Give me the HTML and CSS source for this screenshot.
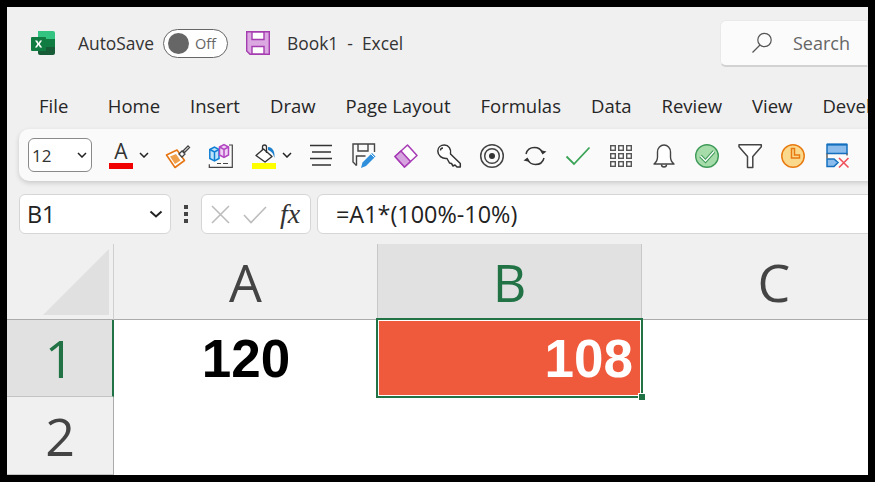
FILE: index.html
```html
<!DOCTYPE html>
<html lang="en">
<head>
<meta charset="utf-8">
<title>Book1 - Excel</title>
<link rel="stylesheet" href="styles.css">
</head>
<body>
<div class="app">
  <header class="titlebar">
    <svg class="logo" width="24" height="24" viewBox="0 0 24 24">
      <path d="M7 0h15a2 2 0 0 1 2 2v6H7z" fill="#33c481"/>
      <path d="M7 8h17v8H7z" fill="#21a366"/>
      <path d="M7 16h17v6a2 2 0 0 1-2 2H9a2 2 0 0 1-2-2z" fill="#185c37"/>
      <path d="M15 8h9v8h-9z" fill="#107c41"/>
      <rect x="0" y="6" width="15" height="14" rx="1" fill="#107c41"/>
      <path d="M4 9.500h2.200l1.400 2.400 1.400-2.400h2.100l-2.400 3.500 2.500 3.600H9l-1.500-2.500-1.500 2.500H3.900l2.500-3.600z" fill="#fff"/>
    </svg>
    <span class="autosave">AutoSave</span>
    <div class="toggle"><span class="knob"></span><span class="off">Off</span></div>
    <svg class="savebtn" width="24" height="24" viewBox="0 0 24 24">
      <path d="M.7.700h22.600v22.600H4L.7 20z" fill="#dba8e2" stroke="#a53db0" stroke-width="1.400"/>
      <path d="M6 1h12v7.500H6zM6 15.500h12V23H6z" fill="#fff" stroke="#a53db0" stroke-width="1.400"/>
    </svg>
    <span class="doc">Book1&nbsp; -&nbsp; Excel</span>
    <div class="search">
      <svg width="22" height="22" viewBox="0 0 22 22"><circle cx="13.500" cy="8" r="6.700" fill="none" stroke="#555" stroke-width="1.200"/><path d="M9 13 1.500 20.500" stroke="#555" stroke-width="1.200"/></svg>
      <span>Search</span>
    </div>
  </header>

  <nav class="tabs">
    <span>File</span><span>Home</span><span>Insert</span><span>Draw</span><span>Page Layout</span><span>Formulas</span><span>Data</span><span>Review</span><span>View</span><span>Developer</span>
  </nav>

  <div class="toolbar">
    <div class="combo"><span>12</span>
      <svg width="10" height="6" viewBox="0 0 10 6"><path d="M1 1l4 4 4-4" fill="none" stroke="#222" stroke-width="1.500"/></svg>
    </div>
    <div class="group">
      <svg class="ic" viewBox="0 0 24 28"><text x="12" y="18" class="ltr">A</text><rect y="22" width="24" height="6" fill="#f00000"/></svg>
      <svg class="chev" width="10" height="6" viewBox="0 0 10 6"><path d="M1 1l4 4 4-4" fill="none" stroke="#222" stroke-width="1.500"/></svg>
    </div>
    <svg class="ic" viewBox="0 0 24 28">
      <path d="M.5 14 11 9l7.500 10.500L9 26.500z" fill="#fff" stroke="#e67613" stroke-width="1.600" stroke-linejoin="round"/>
      <path d="M4 15.500l6-2.500 4.500 6.500L9 23z" fill="#f0a04a"/>
      <path d="M13 13l3-3 3 3-3 3zM17 10l5-5 1.500 1.500-5 5z" fill="#fff" stroke="#444" stroke-width="1.300"/>
    </svg>
    <svg class="ic" viewBox="0 0 24 28">
      <path d="M.8 8.500 5.500 6 10 8.500v9L5.500 20 .8 17.500z" fill="#bfe3fa" stroke="#0f7fd4" stroke-width="1.500"/>
      <path d="M.8 8.500 5.500 11 10 8.500M5.500 11v9" fill="none" stroke="#0f7fd4" stroke-width="1.500"/>
      <path d="M10.500 6 15 3.500 19.500 6v8L15 16.500 10.500 14z" fill="#f0d3f4" stroke="#b246c2" stroke-width="1.500"/>
      <path d="M10.500 6 15 8.500 19.500 6M15 8.500v8" fill="none" stroke="#b246c2" stroke-width="1.500"/>
      <path d="M20 4h3.300v22.300H.3v-3M8 22.500h4M14 22.500h5" fill="none" stroke="#444" stroke-width="1.200"/>
    </svg>
    <div class="group">
      <svg class="ic" viewBox="0 0 24 28">
        <path d="M4 14.500 11.500 8l8.500 7.500-7 5.500z" fill="#fff" stroke="#333" stroke-width="1.400" stroke-linejoin="round"/>
        <path d="M10.500 9V6a2 2 0 0 1 4 0v6" fill="none" stroke="#333" stroke-width="1.300"/>
        <path d="M16 6c4.500 0 7 4 6.500 11l-1.500-4c-1-2-2.500-3-5-4z" fill="#1d80cf"/>
        <rect y="22" width="24" height="6" fill="#ffff00"/>
      </svg>
      <svg class="chev" width="10" height="6" viewBox="0 0 10 6"><path d="M1 1l4 4 4-4" fill="none" stroke="#222" stroke-width="1.500"/></svg>
    </div>
    <svg class="ic" viewBox="0 0 24 28"><path d="M1 4.500h22M3 11h19M1 17.500h22M3 24h19" stroke="#333" stroke-width="1.400" fill="none"/></svg>
    <svg class="ic" viewBox="0 0 24 28">
      <path d="M4.500 24.500 1 21V3h21.500v8" fill="none" stroke="#444" stroke-width="1.400"/>
      <path d="M6 3v7h10V3M4.500 24.500V15h9" fill="none" stroke="#444" stroke-width="1.400"/>
      <path d="M9 27l1.500-5.500L20 12l3.500 3.500-9.500 9.500z" fill="#2f8fdc"/>
      <path d="M19 13l3.500 3.500" stroke="#fff" stroke-width="1"/>
    </svg>
    <svg class="ic" viewBox="0 0 24 28">
      <path d="M1 15.500 13.500 4 23 14.500 10.500 26z" fill="#fff" stroke="#a63ab4" stroke-width="1.500" stroke-linejoin="round"/>
      <path d="M1 15.500l6-5.500 9.500 10.500-6 5.500z" fill="#d6a4de" stroke="#a63ab4" stroke-width="1.500" stroke-linejoin="round"/>
    </svg>
    <svg class="ic" viewBox="0 0 24 28">
      <path d="M13.500 13 23.300 22.500V26H20L18 24 16 25 14.500 22.500 12.500 22 10 17.500C5 18 .8 14.500.8 10 .8 6.500 3.500 4 7.500 4 11.500 4 14.500 8 13.500 13Z" fill="#fff" stroke="#333" stroke-width="1.500" stroke-linejoin="round"/>
      <path d="M3.500 9.500c0-1.500 1-2.500 2.500-2.500" fill="none" stroke="#333" stroke-width="1.300"/>
    </svg>
    <svg class="ic" viewBox="0 0 24 28">
      <circle cx="12" cy="15" r="11.300" fill="none" stroke="#444" stroke-width="1.500"/>
      <circle cx="12" cy="15" r="7.300" fill="none" stroke="#444" stroke-width="1.500"/>
      <circle cx="12" cy="15" r="3" fill="#333"/>
    </svg>
    <svg class="ic" viewBox="0 0 24 28">
      <path d="M3 13c1-4 4.500-6.500 8.500-6.500 3.500 0 6.500 2 8 5" fill="none" stroke="#333" stroke-width="1.500"/>
      <path d="M21 17c-1 4-4.500 6.500-8.500 6.500-3.500 0-6.500-2-8-5" fill="none" stroke="#333" stroke-width="1.500"/>
      <path d="M23.500 10.500l-4 3-2.500-4.500zM.5 19.500l4-3 2.500 4.500z" fill="#333"/>
    </svg>
    <svg class="ic" viewBox="0 0 24 28"><path d="M.5 15.500 8 23 23.500 6.500" fill="none" stroke="#3aa356" stroke-width="1.800"/></svg>
    <svg class="ic" viewBox="0 0 24 28">
      <g fill="#fff" stroke="#555" stroke-width="1.400">
        <rect x="1.700" y="4.700" width="4.600" height="4.600"/><rect x="9.700" y="4.700" width="4.600" height="4.600"/><rect x="17.700" y="4.700" width="4.600" height="4.600"/>
        <rect x="1.700" y="12.700" width="4.600" height="4.600"/><rect x="9.700" y="12.700" width="4.600" height="4.600"/><rect x="17.700" y="12.700" width="4.600" height="4.600"/>
        <rect x="1.700" y="20.700" width="4.600" height="4.600"/><rect x="9.700" y="20.700" width="4.600" height="4.600"/><rect x="17.700" y="20.700" width="4.600" height="4.600"/>
      </g>
    </svg>
    <svg class="ic" viewBox="0 0 24 28">
      <path d="M2 23c2.500-2 3.500-3.500 3.500-7V11c0-4 3-7 6.500-7s6.500 3 6.500 7v5c0 3.500 1 5 3.500 7z" fill="#fff" stroke="#444" stroke-width="1.400" stroke-linejoin="round"/>
      <path d="M9.500 23.500c0 3.300 5 3.300 5 0" fill="none" stroke="#444" stroke-width="1.400"/>
    </svg>
    <svg class="ic" viewBox="0 0 24 28">
      <circle cx="12" cy="15" r="11.300" fill="#a6dcaa" stroke="#3f9a58" stroke-width="1.400"/>
      <path d="M5.500 15l5 5L19 10.500" fill="none" stroke="#3f9a58" stroke-width="3.400"/>
      <path d="M5.500 15l5 5L19 10.500" fill="none" stroke="#fff" stroke-width="1.300"/>
    </svg>
    <svg class="ic" viewBox="0 0 24 28"><path d="M1 3.700h22.300v2L14.800 15.500v11h-5.300v-11L1 5.700z" fill="#fff" stroke="#444" stroke-width="1.500" stroke-linejoin="round"/></svg>
    <svg class="ic" viewBox="0 0 24 28">
      <circle cx="12" cy="15" r="11.200" fill="#fbd98c" stroke="#e87a12" stroke-width="1.500"/>
      <path d="M10.500 7.500h3v6.500h5v3h-8z" fill="#fbd98c" stroke="#e87a12" stroke-width="1.500"/>
    </svg>
    <svg class="ic" viewBox="0 0 24 28">
      <path d="M3 3.500h20v9H3z" fill="#8bbcec" stroke="#1470be" stroke-width="1.500"/>
      <path d="M3 3.500h20" stroke="#1470be" stroke-width="2"/>
      <path d="M3 12.500v5M23 12.500v2" stroke="#555" stroke-width="1.400" fill="none"/>
      <path d="M3 18h7l4 3.500-4 4H3z" fill="#8bbcec" stroke="#1470be" stroke-width="1.500"/>
      <path d="M15 17l9.500 9.500M24.500 17 15 26.500" stroke="#f0505a" stroke-width="1.600" fill="none"/>
    </svg>
  </div>

  <div class="formula">
    <div class="namebox"><span>B1</span>
      <svg width="14" height="8" viewBox="0 0 14 8"><path d="M1.500 1.500 7 6.500l5.500-5" fill="none" stroke="#222" stroke-width="2"/></svg>
    </div>
    <div class="dots"><i></i><i></i><i></i></div>
    <div class="fxbox">
      <svg width="19" height="19" viewBox="0 0 19 19"><path d="M1 1l17 17M18 1 1 18" stroke="#bcbcbc" stroke-width="1.600"/></svg>
      <svg width="24" height="19" viewBox="0 0 24 19"><path d="M1 10l7 7.500L23 2" fill="none" stroke="#bcbcbc" stroke-width="1.600"/></svg>
      <span class="fx">fx</span>
    </div>
    <div class="input">=A1*(100%-10%)</div>
  </div>

  <div class="sheet">
    <div class="corner"><svg width="70" height="70" viewBox="0 0 70 70"><path d="M68 2v66H2z" fill="#e0e0e0"/></svg></div>
    <div class="colhead">A</div>
    <div class="colhead sel">B</div>
    <div class="colhead">C</div>
    <div class="rowhead sel">1</div>
    <div class="cell bold">120</div>
    <div class="cell active">108<span class="handle"></span></div>
    <div class="cell"></div>
    <div class="rowhead">2</div>
    <div class="cell"></div>
    <div class="cell"></div>
    <div class="cell"></div>
  </div>
</div>
</body>
</html>
```

FILE: styles.css
```css
* { box-sizing: border-box; }
html, body { margin: 0; height: 100%; }
body { background: #000; padding: 7px; overflow: hidden; }
.app {
  width: 861px; height: 468px; background: #f0f0f0; overflow: hidden;
  display: flex; flex-direction: column;
  font-family: "Open Sans", "Liberation Sans", sans-serif; color: #333;
}
.titlebar { flex: 0 0 72px; display: flex; align-items: center; padding-left: 24px; }
.logo { flex: none; }
.autosave { margin-left: 23px; font-size: 17.400px; }
.toggle {
  margin-left: 9px; width: 65px; height: 29px; border: 1px solid #666; border-radius: 15px; background: #fff;
  display: flex; align-items: center; padding-left: 4px; gap: 6px; flex: none;
}
.knob { width: 21px; height: 21px; border-radius: 50%; background: #666; }
.off { font-size: 14.500px; color: #666; }
.savebtn { margin-left: 18px; flex: none; }
.doc { margin-left: 17px; font-size: 17.400px; white-space: pre; }
.search {
  margin-left: auto; width: 148px; height: 47px; flex: none; background: #fbfbfb; border-radius: 6px 0 0 6px;
  border: 1px solid #e9e9e9; border-bottom: 2px solid #d2d2d2; display: flex; align-items: center;
  padding-left: 30px; gap: 20px; font-size: 18px; color: #666;
}
.tabs {
  flex: 0 0 50px; display: flex; align-items: center; gap: 30px; padding-left: 32px; padding-top: 3px;
  font-size: 18.500px; color: #262626; white-space: nowrap;
}
.tabs span { flex: none; }
.tabs span:first-child { margin-right: 9.500px; }
.toolbar {
  flex: 0 0 52px; margin-left: 12px; margin-right: -20px; padding-left: 9px; background: #fafafa; border-radius: 10px;
  box-shadow: 0 2px 5px rgba(0,0,0,.16); display: flex; align-items: center; gap: 18.930px;
}
.combo {
  width: 64px; height: 34px; margin-right: -2px; border: 1px solid #8a8a8a; border-radius: 6px; background: #fff;
  display: flex; align-items: center; justify-content: space-between; padding: 0 4px 0 3px; font-size: 17px; flex: none;
}
.ic { width: 24px; height: 28px; flex: none; overflow: visible; }
.ltr { font-size: 21px; fill: #333; text-anchor: middle; font-family: "Open Sans", sans-serif; }
.group { display: flex; align-items: center; width: 38px; flex: none; }
.chev { margin-left: 6px; margin-right: -4px; flex: none; }
.formula { flex: 0 0 40px; margin-top: 13px; margin-left: 12px; display: flex; align-items: stretch; }
.namebox, .fxbox, .input { background: #fff; border: 1px solid #d6d6d6; border-radius: 6px; display: flex; align-items: center; }
.namebox { width: 152px; padding: 0 7px 0 7px; justify-content: space-between; font-size: 23.400px; color: #222; }
.dots { width: 30px; display: flex; flex-direction: column; align-items: center; justify-content: center; gap: 3px; }
.dots i { width: 4px; height: 4px; background: #444; display: block; }
.fxbox { width: 110px; padding-left: 9px; gap: 13px; }
.fx { font-family: "Liberation Serif", serif; font-style: italic; font-size: 28px; color: #333; }
.input { flex: 1; margin-left: 6px; margin-right: -8px; padding-left: 18px; font-size: 23.400px; color: #222; }
.sheet {
  flex: 1; margin-top: 10px; display: grid; grid-template-columns: 107px 264px 264px 264px; grid-template-rows: 76px 77px 1fr;
  min-height: 0;
}
.corner { border-right: 1px solid #d0d0d0; display: flex; align-items: flex-end; justify-content: flex-end; padding: 0 2px 2px 0; border-bottom: 1px solid #ababab; }
.corner svg { display: block; }
.colhead {
  border-bottom: 1px solid #ababab; border-right: 1px solid #c8c8c8; display: flex; align-items: center; justify-content: center;
  font-size: 52px; color: #444; line-height: 1;
}
.colhead:nth-child(4) { border-right: 0; }
.colhead.sel { background: #e1e1e1; color: #217346; }
.rowhead {
  border-right: 1px solid #ababab; border-bottom: 1px solid #c4c4c4; display: flex; align-items: center; justify-content: center;
  font-size: 52px; color: #444; line-height: 1;
}
.rowhead.sel { background: #e1e1e1; color: #217346; border-right: 2px solid #217346; }
.cell { background: #fff; font-family: "Liberation Sans", sans-serif; font-weight: 700; font-size: 53px; display: flex; align-items: center; color: #000; min-width: 0; }
.bold { justify-content: center; }
.active {
  position: relative; justify-content: flex-end; padding-right: 8px; background: #ef593c; color: #fff;
  margin: -2px 0 0 -2px; width: 267px; height: 80px; border: 2px solid #217346; box-shadow: inset 0 0 0 1px #fff;
}
.handle { position: absolute; right: -5px; bottom: -5px; width: 8px; height: 8px; background: #217346; border: 1px solid #fff; }
```
